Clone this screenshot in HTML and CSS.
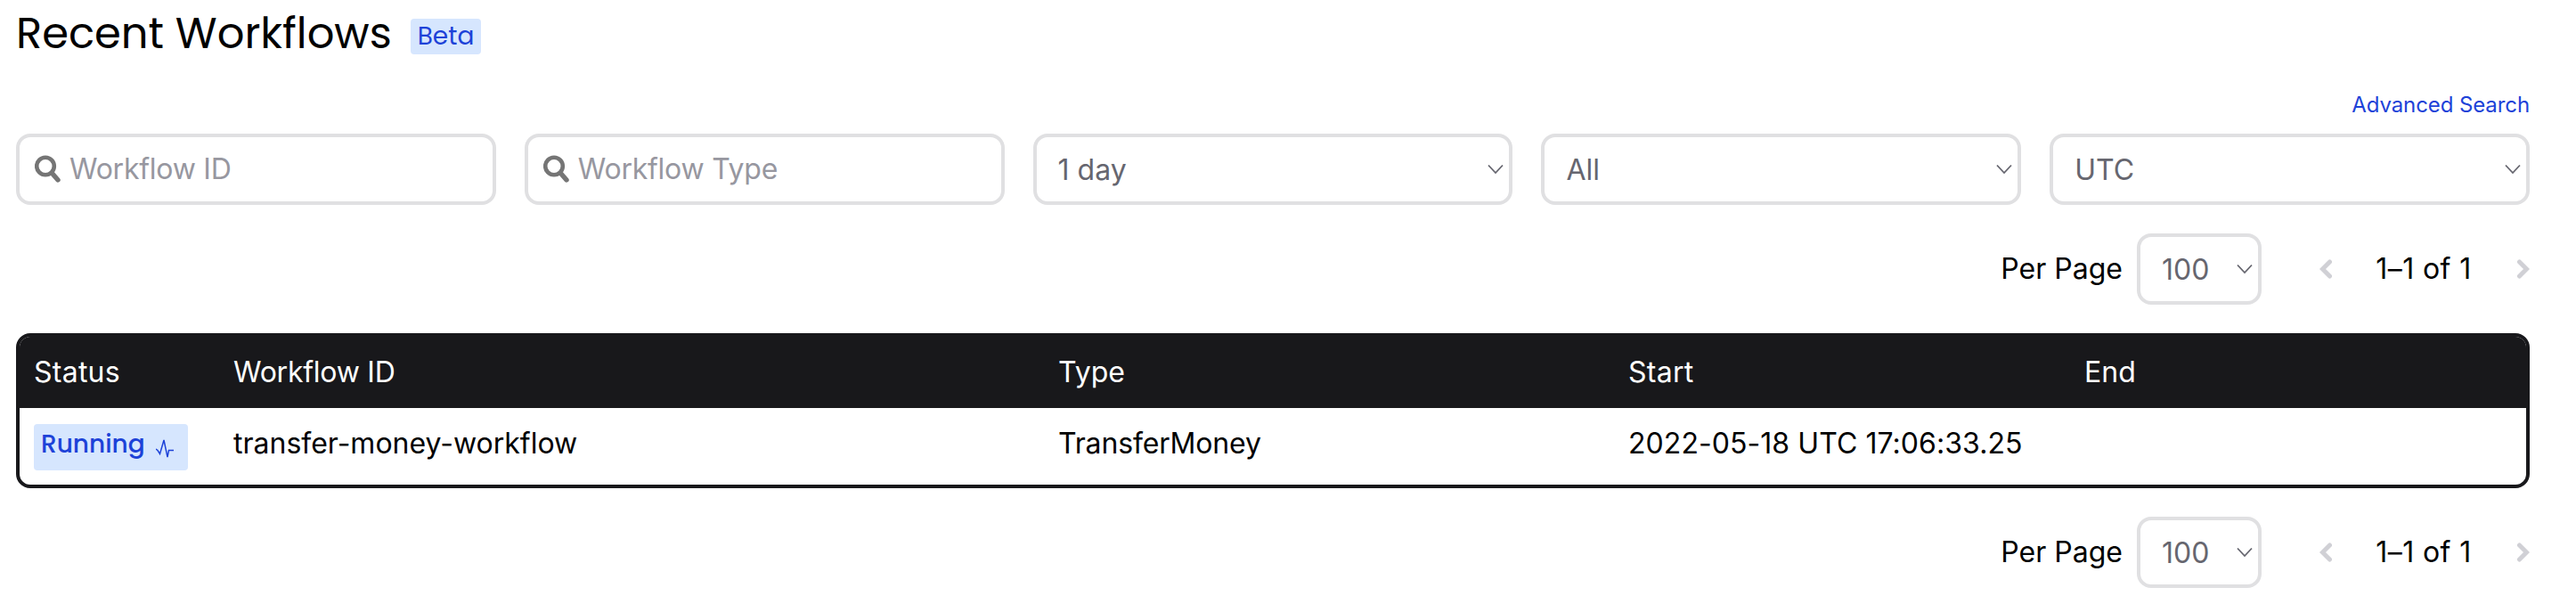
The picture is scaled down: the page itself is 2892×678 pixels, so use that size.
FILE: index.html
```
<!DOCTYPE html>
<html lang="en">
<head>
<meta charset="utf-8">
<title>Recent Workflows</title>
<link rel="stylesheet" href="styles.css">
</head>
<body>
<main class="page">
  <header class="heading">
    <h1 class="title">Recent Workflows</h1>
    <span class="beta">Beta</span>
  </header>
  <div class="advanced"><a class="link">Advanced Search</a></div>
  <section class="filters">
    <div class="field search">
      <svg class="magnifier" viewBox="0 0 30 32"><circle cx="12" cy="12.5" r="9.8"/><path class="handle" d="M19.5 20.5L26 28"/></svg>
      <span class="placeholder">Workflow ID</span>
    </div>
    <div class="field search">
      <svg class="magnifier" viewBox="0 0 30 32"><circle cx="12" cy="12.5" r="9.8"/><path class="handle" d="M19.5 20.5L26 28"/></svg>
      <span class="placeholder">Workflow Type</span>
    </div>
    <div class="field select"><span>1 day</span><svg class="chevron" viewBox="0 0 18 12"><path d="M1 1.5L9 10L17 1.5"/></svg></div>
    <div class="field select"><span>All</span><svg class="chevron" viewBox="0 0 18 12"><path d="M1 1.5L9 10L17 1.5"/></svg></div>
    <div class="field select"><span>UTC</span><svg class="chevron" viewBox="0 0 18 12"><path d="M1 1.5L9 10L17 1.5"/></svg></div>
  </section>
  <nav class="pagination">
    <span class="per-page">Per Page</span>
    <div class="field select page-size"><span>100</span><svg class="chevron" viewBox="0 0 18 12"><path d="M1 1.5L9 10L17 1.5"/></svg></div>
    <svg class="arrow" viewBox="0 0 14 22"><path d="M11.5 3L3.5 11L11.5 19"/></svg>
    <span class="range">1–1 of 1</span>
    <svg class="arrow" viewBox="0 0 14 22"><path d="M2.5 3L10.5 11L2.5 19"/></svg>
  </nav>
  <section class="table">
    <div class="row head">
      <span class="status-label">Status</span><span class="id-label">Workflow ID</span><span>Type</span><span class="start-label">Start</span><span>End</span>
    </div>
    <div class="row body">
      <div class="status"><span class="running">Running</span><svg class="pulse" viewBox="0 0 20 24"><path d="M0 13L2 14.5L4.5 18.5L9 3L13 22L14.5 14.5H20"/></svg></div>
      <span>transfer-money-workflow</span><span class="type">TransferMoney</span><span class="date">2022-05-18 UTC 17:06:33.25</span><span></span>
    </div>
  </section>
  <nav class="pagination">
    <span class="per-page">Per Page</span>
    <div class="field select page-size"><span>100</span><svg class="chevron" viewBox="0 0 18 12"><path d="M1 1.5L9 10L17 1.5"/></svg></div>
    <svg class="arrow" viewBox="0 0 14 22"><path d="M11.5 3L3.5 11L11.5 19"/></svg>
    <span class="range">1–1 of 1</span>
    <svg class="arrow" viewBox="0 0 14 22"><path d="M2.5 3L10.5 11L2.5 19"/></svg>
  </nav>
</main>
</body>
</html>
```
FILE: styles.css
```
* { box-sizing: border-box; }
body { margin: 0; background: #fff; color: #000; font-family: Inter, sans-serif; font-size: 32px; line-height: 48px; }
svg { display: block; fill: none; flex: none; }
.page { width: 2840px; padding-left: 18px; }
.heading { display: flex; align-items: flex-start; height: 102px; }
.title { margin: 14px 0 0; width: 443px; font-family: Poppins, Inter, sans-serif; font-size: 48px; font-weight: 400; line-height: 48px; white-space: nowrap; }
.beta { margin-top: 21px; width: 79px; height: 40px; border-radius: 4px; background: #d6e6fe; color: #1d42d8; font-family: Poppins, Inter, sans-serif; font-size: 28px; line-height: 40px; text-align: center; }
.advanced { display: flex; justify-content: flex-end; height: 48px; }
.link { font-size: 24px; line-height: 32px; letter-spacing: -0.1px; color: #1d42d8; white-space: nowrap; }
.filters { display: grid; grid-template-columns: repeat(5, 1fr); gap: 32px; }
.field { display: flex; align-items: center; height: 80px; border: 4px solid #e0e0e2; border-radius: 16px; background: #fff; white-space: nowrap; }
.search { padding-left: 17px; }
.magnifier { width: 30px; height: 32px; stroke: #757575; stroke-width: 4.6; }
.handle { stroke-width: 5.4; stroke-linecap: round; }
.placeholder { margin-left: 9px; letter-spacing: -0.25px; color: #9797a0; }
.select { justify-content: space-between; padding: 2px 6px 0 24px; color: #66666f; }
.chevron { width: 18px; height: 12px; margin-bottom: 2px; stroke: #66666f; stroke-width: 1.8; }
.pagination { display: flex; align-items: center; justify-content: flex-end; height: 80px; margin: 32px 0; }
.per-page { margin-right: 16px; }
.page-size { width: 140px; margin-right: 65px; }
.arrow { width: 14px; height: 22px; stroke: #d0d0d5; stroke-width: 5; stroke-linecap: round; }
.range { width: 208px; padding-right: 2px; text-align: center; letter-spacing: 0.4px; }
.table { height: 174px; border: 4px solid #18181b; border-radius: 16px; overflow: hidden; }
.row { display: grid; grid-template-columns: 224px 926px 640px 512px 1fr; padding-left: 16px; white-space: nowrap; }
.head { height: 80px; background: #18181b; color: #fff; line-height: 79px; }
.status-label, .start-label { letter-spacing: 0.25px; }
.id-label { letter-spacing: -0.25px; }
.type { letter-spacing: -0.15px; }
.date { letter-spacing: 0.06px; }
.body { height: 86px; line-height: 79px; }
.status { display: flex; width: 173px; height: 52px; margin-top: 18px; padding-left: 8px; border-radius: 4px; background: #d6e6fe; color: #1d42d8; font-family: Poppins, Inter, sans-serif; font-size: 28px; font-weight: 500; line-height: 46px; }
.running { width: 129px; }
.pulse { width: 20px; height: 24px; margin-top: 15px; stroke: #1d42d8; stroke-width: 1.5; }
```
